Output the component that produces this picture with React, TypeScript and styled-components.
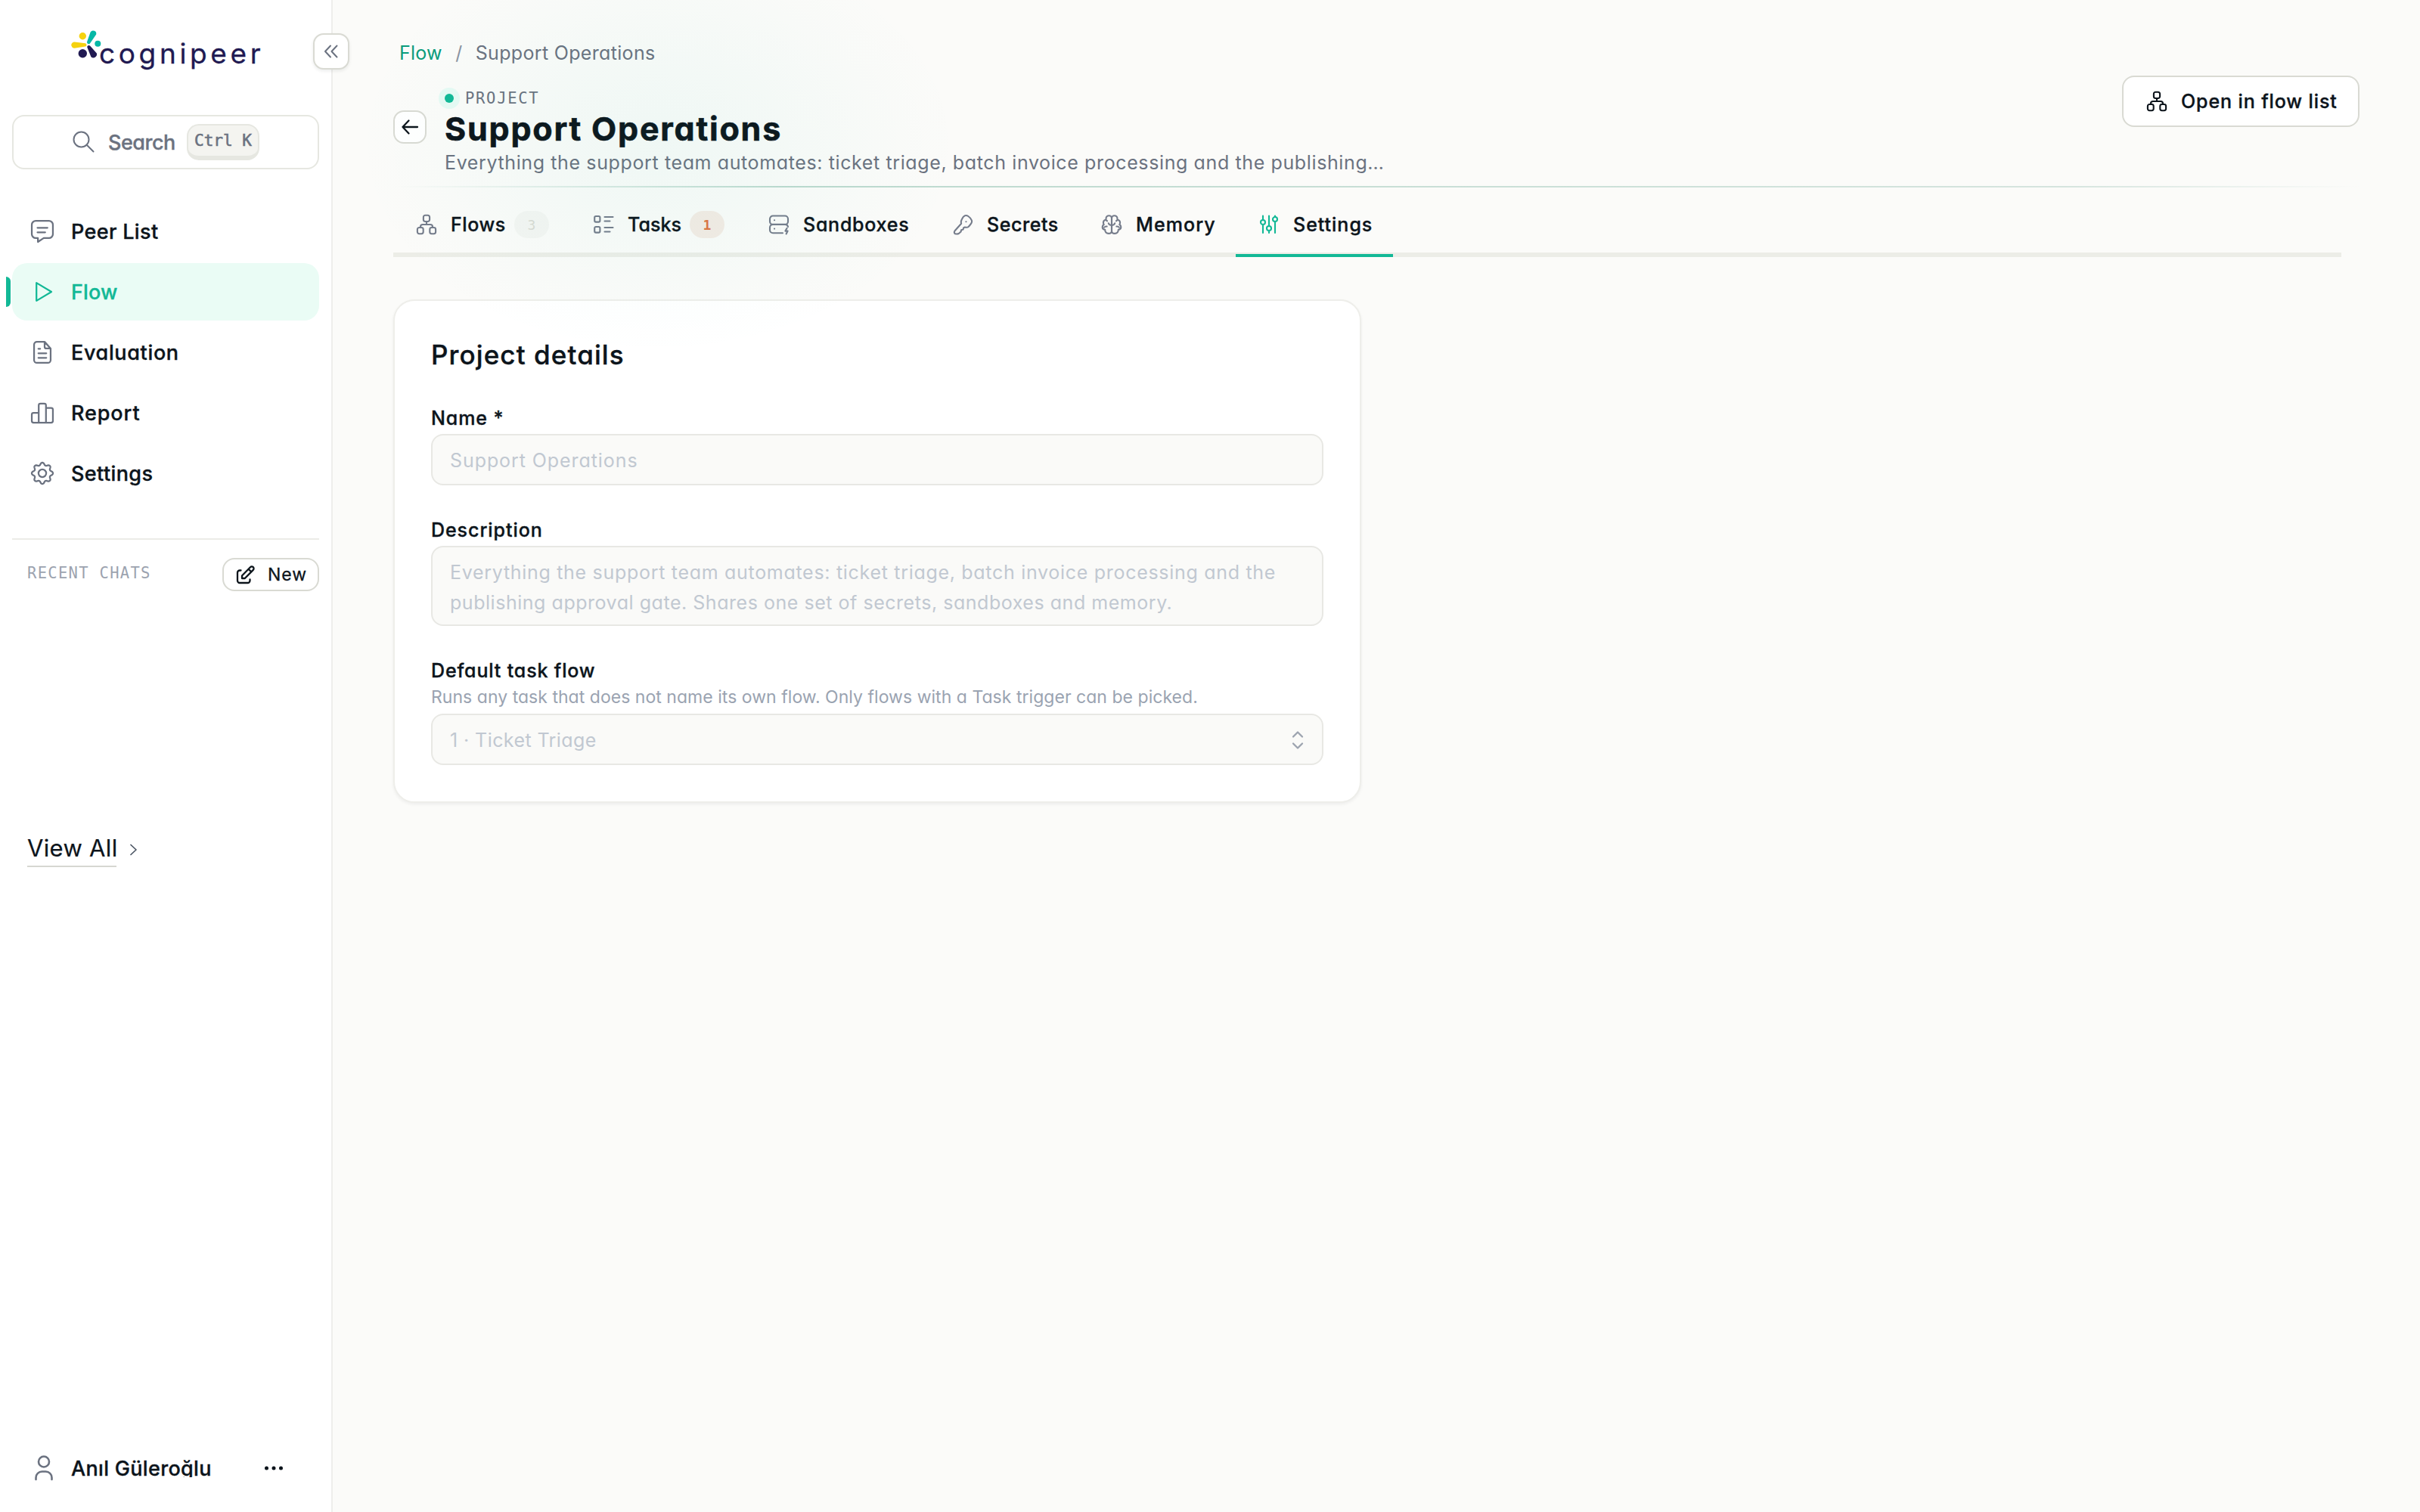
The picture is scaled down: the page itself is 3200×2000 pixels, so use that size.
import React from "react";
import styled, { createGlobalStyle, css } from "styled-components";

const c = {
  ink: "#0c141b",
  muted: "#6b7280",
  faint: "#9ca3af",
  disabled: "#c1c8d1",
  green: "#12b896",
  line: "#ecece7",
  edge: "#d9dad3",
};

const track = css<{ $track?: number }>`
  letter-spacing: ${(p) => p.$track ?? 0}px;
`;

const medium = css`
  font-weight: 500;
  -webkit-text-stroke: 0.35px currentColor;
`;

const mono = css`
  font-family: "DejaVu Sans Mono", "Liberation Mono", monospace;
  white-space: pre;
`;

const Global = createGlobalStyle`
  * { box-sizing: border-box; }
  body { margin: 0; background: #fbfbf9; }
  body, button {
    font-family: Inter, "Liberation Sans", sans-serif;
    font-feature-settings: "cv11";
    color: ${c.ink};
  }
  button { border: 0; margin: 0; padding: 0; background: none; }
  svg { display: block; flex: none; overflow: visible; fill: none; stroke: currentColor; stroke-linecap: round; stroke-linejoin: round; }
`;

const Shell = styled.div`
  display: flex;
  width: 3200px;
  height: 2000px;
  overflow: hidden;
`;

/* ---------- sidebar ---------- */

const Sidebar = styled.aside`
  position: relative;
  display: flex;
  flex-direction: column;
  flex: none;
  width: 440px;
  padding: 0 16px 26px;
  background: #fff;
  border-right: 2px solid #eeeeec;
`;

const Brand = styled.div`
  display: flex;
  align-items: flex-start;
  height: 152px;
  padding: 38px 0 0 78px;
`;

const BrandName = styled.span`
  margin: 13px 0 0 -1px;
  font-size: 37px;
  line-height: 40px;
  color: #211a52;
  -webkit-text-stroke: 0.3px currentColor;
  ${track}
`;

const Collapse = styled.button`
  position: absolute;
  z-index: 3;
  top: 44px;
  left: 414px;
  display: grid;
  place-items: center;
  width: 48px;
  height: 48px;
  color: ${c.muted};
  background: #fff;
  border: 2px solid ${c.edge};
  border-radius: 14px;
  box-shadow: 0 2px 4px rgba(12, 20, 27, 0.08);
`;

const SearchBox = styled.button`
  display: flex;
  flex: none;
  align-items: center;
  height: 72px;
  padding-left: 78px;
  color: ${c.muted};
  border: 2px solid #e6e7e1;
  border-radius: 16px;
`;

const SearchLabel = styled.span`
  ${medium}
  width: 87px;
  margin: 2px 17px 0 17px;
  font-size: 27px;
  line-height: 40px;
  text-align: left;
  white-space: nowrap;
  ${track}
`;

const Kbd = styled.kbd`
  ${mono}
  display: flex;
  align-items: center;
  justify-content: center;
  width: 96px;
  height: 48px;
  font-size: 21px;
  -webkit-text-stroke: 0.6px currentColor;
  background: #f4f4f0;
  border: 2px solid #e6e7e1;
  border-bottom-width: 6px;
  border-radius: 16px;
`;

const Nav = styled.nav`
  display: flex;
  flex-direction: column;
  gap: 4px;
  margin-top: 44px;
`;

const NavItem = styled.a<{ $active?: boolean }>`
  position: relative;
  display: flex;
  align-items: center;
  gap: 20px;
  height: 76px;
  padding-left: 22px;
  border-radius: 20px;
  color: ${(p) => (p.$active ? c.green : c.ink)};
  background: ${(p) => (p.$active ? "#eafcf5" : "transparent")};
  svg {
    color: ${(p) => (p.$active ? c.green : c.muted)};
  }
  ${(p) =>
    p.$active &&
    css`
      &::before {
        content: "";
        position: absolute;
        left: -8px;
        top: 18px;
        width: 6px;
        height: 40px;
        background: ${c.green};
        border-radius: 0 6px 6px 0;
      }
    `}
`;

const NavLabel = styled.span`
  ${medium}
  margin-top: 2px;
  font-size: 27px;
  line-height: 40px;
  white-space: nowrap;
  ${track}
`;

const Recent = styled.section`
  flex: none;
  height: 388px;
  margin-top: 48px;
  border-top: 2px solid ${c.line};
`;

const RecentHead = styled.div`
  display: flex;
  align-items: center;
  justify-content: space-between;
  padding: 24px 0 0 20px;
`;

const RecentTitle = styled.span`
  ${mono}
  margin-top: -4px;
  font-size: 20.5px;
  color: ${c.faint};
  ${track}
`;

const NewButton = styled.button`
  display: flex;
  align-items: center;
  gap: 17px;
  width: 128px;
  height: 44px;
  padding-left: 15px;
  border: 2px solid ${c.edge};
  border-radius: 16px;
  font-size: 23px;
  line-height: 32px;
  -webkit-text-stroke: 0.3px currentColor;
  ${track}
`;

const ViewAll = styled.a`
  display: flex;
  align-items: center;
  gap: 18px;
  padding-left: 20px;
  color: #4b5563;
`;

const ViewAllLabel = styled.span`
  width: 118px;
  padding-bottom: 1px;
  border-bottom: 2px solid #d6d7d1;
  font-size: 31px;
  line-height: 44px;
  color: ${c.ink};
  -webkit-text-stroke: 0.2px currentColor;
  white-space: nowrap;
  ${track}
`;

const UserRow = styled.div`
  display: flex;
  align-items: center;
  height: 64px;
  margin-top: auto;
  padding-left: 26px;
  svg:first-child {
    color: ${c.muted};
  }
`;

const UserName = styled.span`
  ${medium}
  width: 254px;
  height: 24px;
  margin-left: 20px;
  overflow: hidden;
  font-size: 27px;
  line-height: 25px;
  white-space: nowrap;
  ${track}
`;

/* ---------- main ---------- */

const Main = styled.main`
  position: relative;
  flex: 1;
  padding: 50px 80px 0;
  background: #fbfbf9;
  &::after {
    content: "";
    position: absolute;
    z-index: 2;
    inset: 0;
    pointer-events: none;
    background: radial-gradient(
      ellipse 400px 280px at 430px 190px,
      rgba(18, 184, 160, 0.05),
      rgba(18, 184, 160, 0.033) 40%,
      rgba(18, 184, 160, 0.012) 75%,
      rgba(18, 184, 160, 0)
    );
  }
`;

const Crumbs = styled.div`
  display: flex;
  align-items: center;
  height: 40px;
  padding-left: 8px;
  font-size: 25px;
  line-height: 40px;
  color: ${c.muted};
`;

const Crumb = styled.span<{ $link?: boolean }>`
  color: ${(p) => (p.$link ? "#0a9b7b" : c.muted)};
  white-space: nowrap;
  ${track}
`;

const Slash = styled.span`
  width: 44px;
  text-align: center;
  color: #8b93a1;
`;

const Header = styled.header`
  display: flex;
  align-items: flex-start;
  height: 156px;
  padding-top: 10px;
`;

const Back = styled.button`
  display: grid;
  place-items: center;
  width: 44px;
  height: 44px;
  margin: 46px 24px 0 0;
  background: #fff;
  border: 2px solid ${c.edge};
  border-radius: 14px;
`;

const Heading = styled.div`
  flex: 1;
  padding-top: 15px;
`;

const Eyebrow = styled.div`
  ${mono}
  display: flex;
  align-items: center;
  gap: 15px;
  height: 30px;
  font-size: 20.5px;
  line-height: 30px;
  color: ${c.muted};
  ${track}
  &::before {
    content: "";
    width: 12px;
    height: 12px;
    border-radius: 50%;
    background: ${c.green};
    box-shadow: 0 0 0 8px #e6faf4;
  }
`;

const Title = styled.h1`
  margin: 0 0 2px;
  font-size: 43px;
  font-weight: 700;
  line-height: 50px;
  -webkit-text-stroke: 0.6px currentColor;
  ${track}
`;

const Summary = styled.p`
  margin: 0;
  font-size: 25px;
  line-height: 36px;
  color: ${c.muted};
  white-space: nowrap;
  ${track}
`;

const OpenButton = styled.button`
  ${medium}
  display: flex;
  align-items: center;
  gap: 18px;
  width: 314px;
  height: 68px;
  padding-left: 30px;
  background: #fff;
  border: 2px solid ${c.edge};
  border-radius: 16px;
  font-size: 25px;
  white-space: nowrap;
  ${track}
`;

const Rule = styled.div`
  height: 2px;
  background: linear-gradient(90deg, rgba(187, 217, 205, 0), #bcd9ce 20%, #d5e4de 85%, rgba(220, 232, 226, 0));
`;

const Tabs = styled.div`
  display: flex;
  margin: 12px 24px 0 0;
  border-bottom: 6px solid #ecede7;
`;

const Tab = styled.a<{ $width: number; $active?: boolean }>`
  position: relative;
  display: flex;
  align-items: center;
  width: ${(p) => p.$width}px;
  height: 74px;
  padding-left: 30px;
  svg {
    color: ${(p) => (p.$active ? c.green : "#757c8b")};
  }
  ${(p) =>
    p.$active &&
    css`
      &::after {
        content: "";
        position: absolute;
        left: 0;
        right: 0;
        bottom: -6px;
        height: 4px;
        background: ${c.green};
      }
    `}
`;

const TabLabel = styled.span`
  ${medium}
  margin-left: 18px;
  font-size: 25px;
  line-height: 36px;
  white-space: nowrap;
  ${track}
`;

const Count = styled.span<{ $warn?: boolean }>`
  ${mono}
  display: grid;
  place-items: center;
  width: 46px;
  height: 36px;
  margin-left: auto;
  margin-right: 28px;
  border-radius: 18px;
  font-size: 18px;
  font-weight: ${(p) => (p.$warn ? 700 : 400)};
  color: ${(p) => (p.$warn ? "#de7440" : "#d9dad3")};
  background: ${(p) => (p.$warn ? "#f4ebe4" : "#f4f5f2")};
`;

const Card = styled.section`
  width: 1280px;
  margin-top: 56px;
  padding: 45px 48px 48px;
  background: #fff;
  border: 2px solid #eeeeea;
  border-radius: 28px;
  box-shadow: 0 2px 4px rgba(12, 20, 27, 0.06);
`;

const CardTitle = styled.h2`
  ${medium}
  margin: 0 0 40px;
  font-size: 35px;
  line-height: 52px;
  ${track}
`;

const Field = styled.div`
  & + & {
    margin-top: 41px;
  }
`;

const FieldLabel = styled.div`
  ${medium}
  font-size: 25px;
  line-height: 36px;
  ${track}
`;

const Hint = styled.div`
  margin-bottom: 5px;
  font-size: 23px;
  line-height: 34px;
  color: #9aa3b1;
  white-space: nowrap;
  ${track}
`;

const Control = styled.div<{ $tall?: boolean }>`
  display: flex;
  align-items: ${(p) => (p.$tall ? "flex-start" : "center")};
  justify-content: space-between;
  height: ${(p) => (p.$tall ? 106 : 68)}px;
  margin-top: 3px;
  padding: ${(p) => (p.$tall ? "13px 22px 0 23px" : "1px 18px 0 23px")};
  background: #fafaf8;
  border: 2px solid #e8e8e4;
  border-radius: 16px;
  color: ${c.disabled};
  svg {
    color: ${c.faint};
  }
`;

const Value = styled.div`
  font-size: 25px;
  line-height: 40px;
  white-space: nowrap;
  ${track}
`;

/* ---------- drawings ---------- */

const LogoMark = () => (
  <svg width="38" height="42" viewBox="94 38 38 42">
    <g stroke="none">
      <circle cx="109.3" cy="47.8" r="4.7" fill="#f5d20e" />
      <path d="M98.5 55.4 L112.8 57.2 A2.3 2.3 0 0 1 112.8 61.6 L98.5 63.8 A4.2 4.2 0 0 1 98.5 55.4Z" fill="#f5d20e" />
      <path d="M119.6 42.4 A4.2 4.2 0 0 1 127.2 45.6 L119.3 57 A2.3 2.3 0 0 1 115.1 55.2Z" fill="#06b8a6" />
      <circle cx="129.3" cy="57.8" r="4" fill="#06b8a6" />
      <circle cx="109.3" cy="70.8" r="5.7" fill="#211a52" />
      <path d="M115.3 62.6 A2.2 2.2 0 0 1 119 60.6 L127.9 70.6 A4.6 4.6 0 0 1 120.4 75.2Z" fill="#211a52" />
    </g>
  </svg>
);

const gear =
  Array.from({ length: 96 }, (_, i) => {
    const a = (i / 96) * Math.PI * 2;
    const w = Math.cos(8 * a);
    const r = 8.3 + 1.05 * Math.sign(w) * Math.pow(Math.abs(w), 0.7);
    return `${i ? "L" : "M"}${(12 + r * Math.cos(a)).toFixed(2)} ${(12 + r * Math.sin(a)).toFixed(2)}`;
  }).join("") + "Z";

const navPaths: Record<string, string> = {
  peer: "M6.2 2.75h11.6a3.5 3.5 0 0 1 3.5 3.5v8.2a3.5 3.5 0 0 1-3.5 3.5h-4.6L8.1 21.3v-3.35H6.2a3.5 3.5 0 0 1-3.5-3.5V6.25a3.5 3.5 0 0 1 3.5-3.5ZM7.7 8.9h8.8M7.7 12.9h6.8",
  play: "M6.8 4.1v15.8L20 12Z",
  doc: "M7.2 2.75h6.8L19.3 8.6v10.2a2.5 2.5 0 0 1-2.5 2.5H7.2a2.5 2.5 0 0 1-2.5-2.5V5.25a2.5 2.5 0 0 1 2.5-2.5ZM14 2.9v4.2a1.5 1.5 0 0 0 1.5 1.5h3.7M8.5 8.9h1.6M8.5 12.9h7M8.5 16.9h7",
  report: "M8.8 20.7V5.4a1.5 1.5 0 0 1 1.5-1.5h3.4a1.5 1.5 0 0 1 1.5 1.5v15.3M8.8 12H4.2a1.5 1.5 0 0 0-1.5 1.5v5.7a1.5 1.5 0 0 0 1.5 1.5h15.6a1.5 1.5 0 0 0 1.5-1.5V9.3a1.5 1.5 0 0 0-1.5-1.5h-4.6",
  gear: gear + "M15.4 12a3.4 3.4 0 1 1-6.8 0 3.4 3.4 0 1 1 6.8 0Z",
};

const NavIcon = ({ name }: { name: string }) => (
  <svg width="36" height="36" viewBox="0 0 24 24" strokeWidth="1.5">
    <path d={navPaths[name]} />
  </svg>
);

const brainHalf =
  "M14 5.600c0-2-1.500-3.400-3.500-3.400-2.300 0-4 1.700-4 4v1.200c-2.300.6-3.600 2.200-3.600 4 0 .9.300 1.800.8 2.600-1.300.7-2 1.800-2 3.200 0 2 1.500 3.500 3.500 3.700-.2 2.900 1.900 5 4.700 5 2.300 0 4.100-1.300 4.100-3.400ZM6.500 7.400c.2.9.7 1.500 1.500 1.900M4.200 17.600c.8-.9 2-1.300 3.400-1.100M14 14.800c-2.200 0-3.700-.9-4.200-2.600";

const tabPaths: Record<string, string> = {
  flow: "M12.3 1.8h3.4a2.4 2.4 0 0 1 2.4 2.4v3.4a2.4 2.4 0 0 1-2.4 2.4h-3.4a2.4 2.4 0 0 1-2.4-2.4V4.2a2.4 2.4 0 0 1 2.4-2.4ZM4.3 18h3a2.4 2.4 0 0 1 2.4 2.4v3.4a2.4 2.4 0 0 1-2.4 2.4h-3A2.4 2.4 0 0 1 1.9 23.8v-3.4A2.4 2.4 0 0 1 4.3 18ZM20.7 18h3a2.4 2.4 0 0 1 2.4 2.4v3.4a2.4 2.4 0 0 1-2.4 2.4h-3a2.4 2.4 0 0 1-2.4-2.4v-3.4A2.4 2.4 0 0 1 20.7 18ZM14 10v4M6 18v-1a3 3 0 0 1 3-3h10a3 3 0 0 1 3 3v1",
  tasks: "M4 3h3.6a1.8 1.8 0 0 1 1.8 1.8v4A1.8 1.8 0 0 1 7.6 10.6H4A1.8 1.8 0 0 1 2.2 8.8v-4A1.8 1.8 0 0 1 4 3ZM4 17h3.6a1.8 1.8 0 0 1 1.8 1.8v4a1.8 1.8 0 0 1-1.8 1.8H4a1.8 1.8 0 0 1-1.8-1.8v-4A1.8 1.8 0 0 1 4 17ZM15.500 4h11M15.500 9.500h7M15.500 18h11M15.500 23.500h7",
  sandbox: "M6 2.500h16a4 4 0 0 1 4 4v3.400a4 4 0 0 1-4 4H6a4 4 0 0 1-4-4V6.500a4 4 0 0 1 4-4ZM22 13.900a4 4 0 0 1 4 3M6 13.900a4 4 0 0 0-4 4v3.400a4 4 0 0 0 4 4h13M8 8.200h.1M8 19.600h.1M24.600 18.800l-2.200 3.800h3.200l-2 3.800",
  key: "M16.900 2.200c1.700-.5 3.100-.1 4.400.8 2 1.400 3.600 3.200 4.500 5.300.6 1.500.3 2.800-.5 4-1 1.500-2.200 3.200-3.700 4.600-1.300 1.200-3.100.9-4.700.6l-1.700.7-.6 2.300-2.500.7-.5 2.300-2.900 2.500c-1.500.7-4.900.6-5.300-.2-.6-.9-.7-2.400.2-3.500l8.500-9.600c-.8-2.300-.2-4 .9-6 .9-1.900 1.900-3.800 3.900-4.500ZM18.400 10.200h.1",
  sliders: "M6 2.500v5.500M6 14v11M14 2.500v13.500M14 22v3M22 2.500v1.500M22 10v15M9 11a3 3 0 1 1-6 0 3 3 0 1 1 6 0ZM17 19a3 3 0 1 1-6 0 3 3 0 1 1 6 0ZM25 7a3 3 0 1 1-6 0 3 3 0 1 1 6 0Z",
};

const TabIcon = ({ name }: { name: string }) => (
  <svg width="28" height="28" viewBox="0 0 28 28" strokeWidth="2.100">
    {name === "brain" ? (
      <>
        <path d={brainHalf} />
        <path d={brainHalf} transform="matrix(-1 0 0 1 28 0)" />
      </>
    ) : (
      <path d={tabPaths[name]} />
    )}
  </svg>
);

const nav = [
  { icon: "peer", label: "Peer List", track: 0.345 },
  { icon: "play", label: "Flow", active: true, track: 0.114 },
  { icon: "doc", label: "Evaluation", track: 0.647 },
  { icon: "report", label: "Report", track: 0.899 },
  { icon: "gear", label: "Settings", track: 0.397 },
];

const tabs = [
  { icon: "flow", label: "Flows", width: 234, count: 3, track: 0.6 },
  { icon: "tasks", label: "Tasks", width: 232, count: 1, warn: true, track: 0.089 },
  { icon: "sandbox", label: "Sandboxes", width: 243, track: 0.75 },
  { icon: "key", label: "Secrets", width: 197, track: 0.572 },
  { icon: "brain", label: "Memory", width: 208, track: 1.1 },
  { icon: "sliders", label: "Settings", width: 208, active: true, track: 0.984 },
];

export default function App() {
  return (
    <Shell>
      <Global />
      <Sidebar>
        <Brand>
          <LogoMark />
          <BrandName $track={4.633}>cognipeer</BrandName>
        </Brand>
        <Collapse>
          <svg width="18" height="18" viewBox="0 0 18 18" strokeWidth="2">
            <path d="M8 1.500 1 9l7 7.500M16.500 1.500 9.500 9l7 7.500" />
          </svg>
        </Collapse>
        <SearchBox>
          <svg width="30" height="30" viewBox="0 0 30 30" strokeWidth="2">
            <path d="M21.500 11.500a10 10 0 1 1-20 0 10 10 0 1 1 20 0ZM18.500 18.500 27.500 27.500" />
          </svg>
          <SearchLabel $track={-0.494}>Search</SearchLabel>
          <Kbd>Ctrl K</Kbd>
        </SearchBox>
        <Nav>
          {nav.map((n) => (
            <NavItem key={n.label} $active={n.active}>
              <NavIcon name={n.icon} />
              <NavLabel $track={n.track}>{n.label}</NavLabel>
            </NavItem>
          ))}
        </Nav>
        <Recent>
          <RecentHead>
            <RecentTitle $track={1.3}>RECENT CHATS</RecentTitle>
            <NewButton $track={1}>
              <svg width="26" height="26" viewBox="0 0 26 26" strokeWidth="2.300">
                <path d="M7.500 7.500H6a3 3 0 0 0-3 3V21a3 3 0 0 0 3 3h10.500a3 3 0 0 0 3-3v-1.500M9 14.500 20 3.200a2.600 2.600 0 0 1 3.800 3.700L12.800 18H9ZM17.500 5.700l3.800 3.700" />
              </svg>
              New
            </NewButton>
          </RecentHead>
        </Recent>
        <ViewAll>
          <ViewAllLabel $track={0.323}>View All</ViewAllLabel>
          <svg width="10" height="16" viewBox="0 0 10 16" strokeWidth="1.700">
            <path d="M1 1.500 8 8l-7 6.500" />
          </svg>
        </ViewAll>
        <UserRow>
          <svg width="32" height="36" viewBox="0 0 32 36" strokeWidth="2.600">
            <path d="M23 9.500a7 7 0 1 1-14 0 7 7 0 1 1 14 0ZM5.500 33v-2.500a8 8 0 0 1 8-8h5a8 8 0 0 1 8 8V33" />
          </svg>
          <UserName $track={0.321}>Anıl Güleroğlu</UserName>
          <svg width="28" height="8" viewBox="0 0 28 8">
            <path d="M4.500 4h0M14 4h0M23.500 4h0" strokeWidth="5" />
          </svg>
        </UserRow>
      </Sidebar>

      <Main>
        <Crumbs>
          <Crumb $link $track={0.215}>Flow</Crumb>
          <Slash>/</Slash>
          <Crumb $track={0.331}>Support Operations</Crumb>
        </Crumbs>
        <Header>
          <Back>
            <svg width="24" height="24" viewBox="0 0 24 24" strokeWidth="2.300">
              <path d="M22 12H2.500M10.500 3.500 2.500 12l8 8.500" />
            </svg>
          </Back>
          <Heading>
            <Eyebrow $track={1.7}>PROJECT</Eyebrow>
            <Title $track={1.787}>Support Operations</Title>
            <Summary $track={0.617}>
              Everything the support team automates: ticket triage, batch invoice processing and the publishing…
            </Summary>
          </Heading>
          <OpenButton $track={0.894}>
            <TabIcon name="flow" />
            Open in flow list
          </OpenButton>
        </Header>
        <Rule />
        <Tabs>
          {tabs.map((t) => (
            <Tab key={t.label} $width={t.width} $active={t.active}>
              <TabIcon name={t.icon} />
              <TabLabel $track={t.track}>{t.label}</TabLabel>
              {t.count && <Count $warn={t.warn}>{t.count}</Count>}
            </Tab>
          ))}
        </Tabs>
        <Card>
          <CardTitle $track={1.1}>Project details</CardTitle>
          <Field>
            <FieldLabel $track={0.9}>Name *</FieldLabel>
            <Control>
              <Value $track={0.92}>Support Operations</Value>
            </Control>
          </Field>
          <Field>
            <FieldLabel $track={0.948}>Description</FieldLabel>
            <Control $tall>
              <div>
                <Value $track={0.7}>
                  Everything the support team automates: ticket triage, batch invoice processing and the
                </Value>
                <Value $track={0.533}>publishing approval gate. Shares one set of secrets, sandboxes and memory.</Value>
              </div>
            </Control>
          </Field>
          <Field>
            <FieldLabel $track={0.856}>Default task flow</FieldLabel>
            <Hint $track={0.034}>
              Runs any task that does not name its own flow. Only flows with a Task trigger can be picked.
            </Hint>
            <Control>
              <Value $track={0.417}>1 · Ticket Triage</Value>
              <svg width="28" height="28" viewBox="0 0 28 28" strokeWidth="2.300">
                <path d="M8 9.500 14 3.500l6 6M8 18.500l6 6 6-6" />
              </svg>
            </Control>
          </Field>
        </Card>
      </Main>
    </Shell>
  );
}
